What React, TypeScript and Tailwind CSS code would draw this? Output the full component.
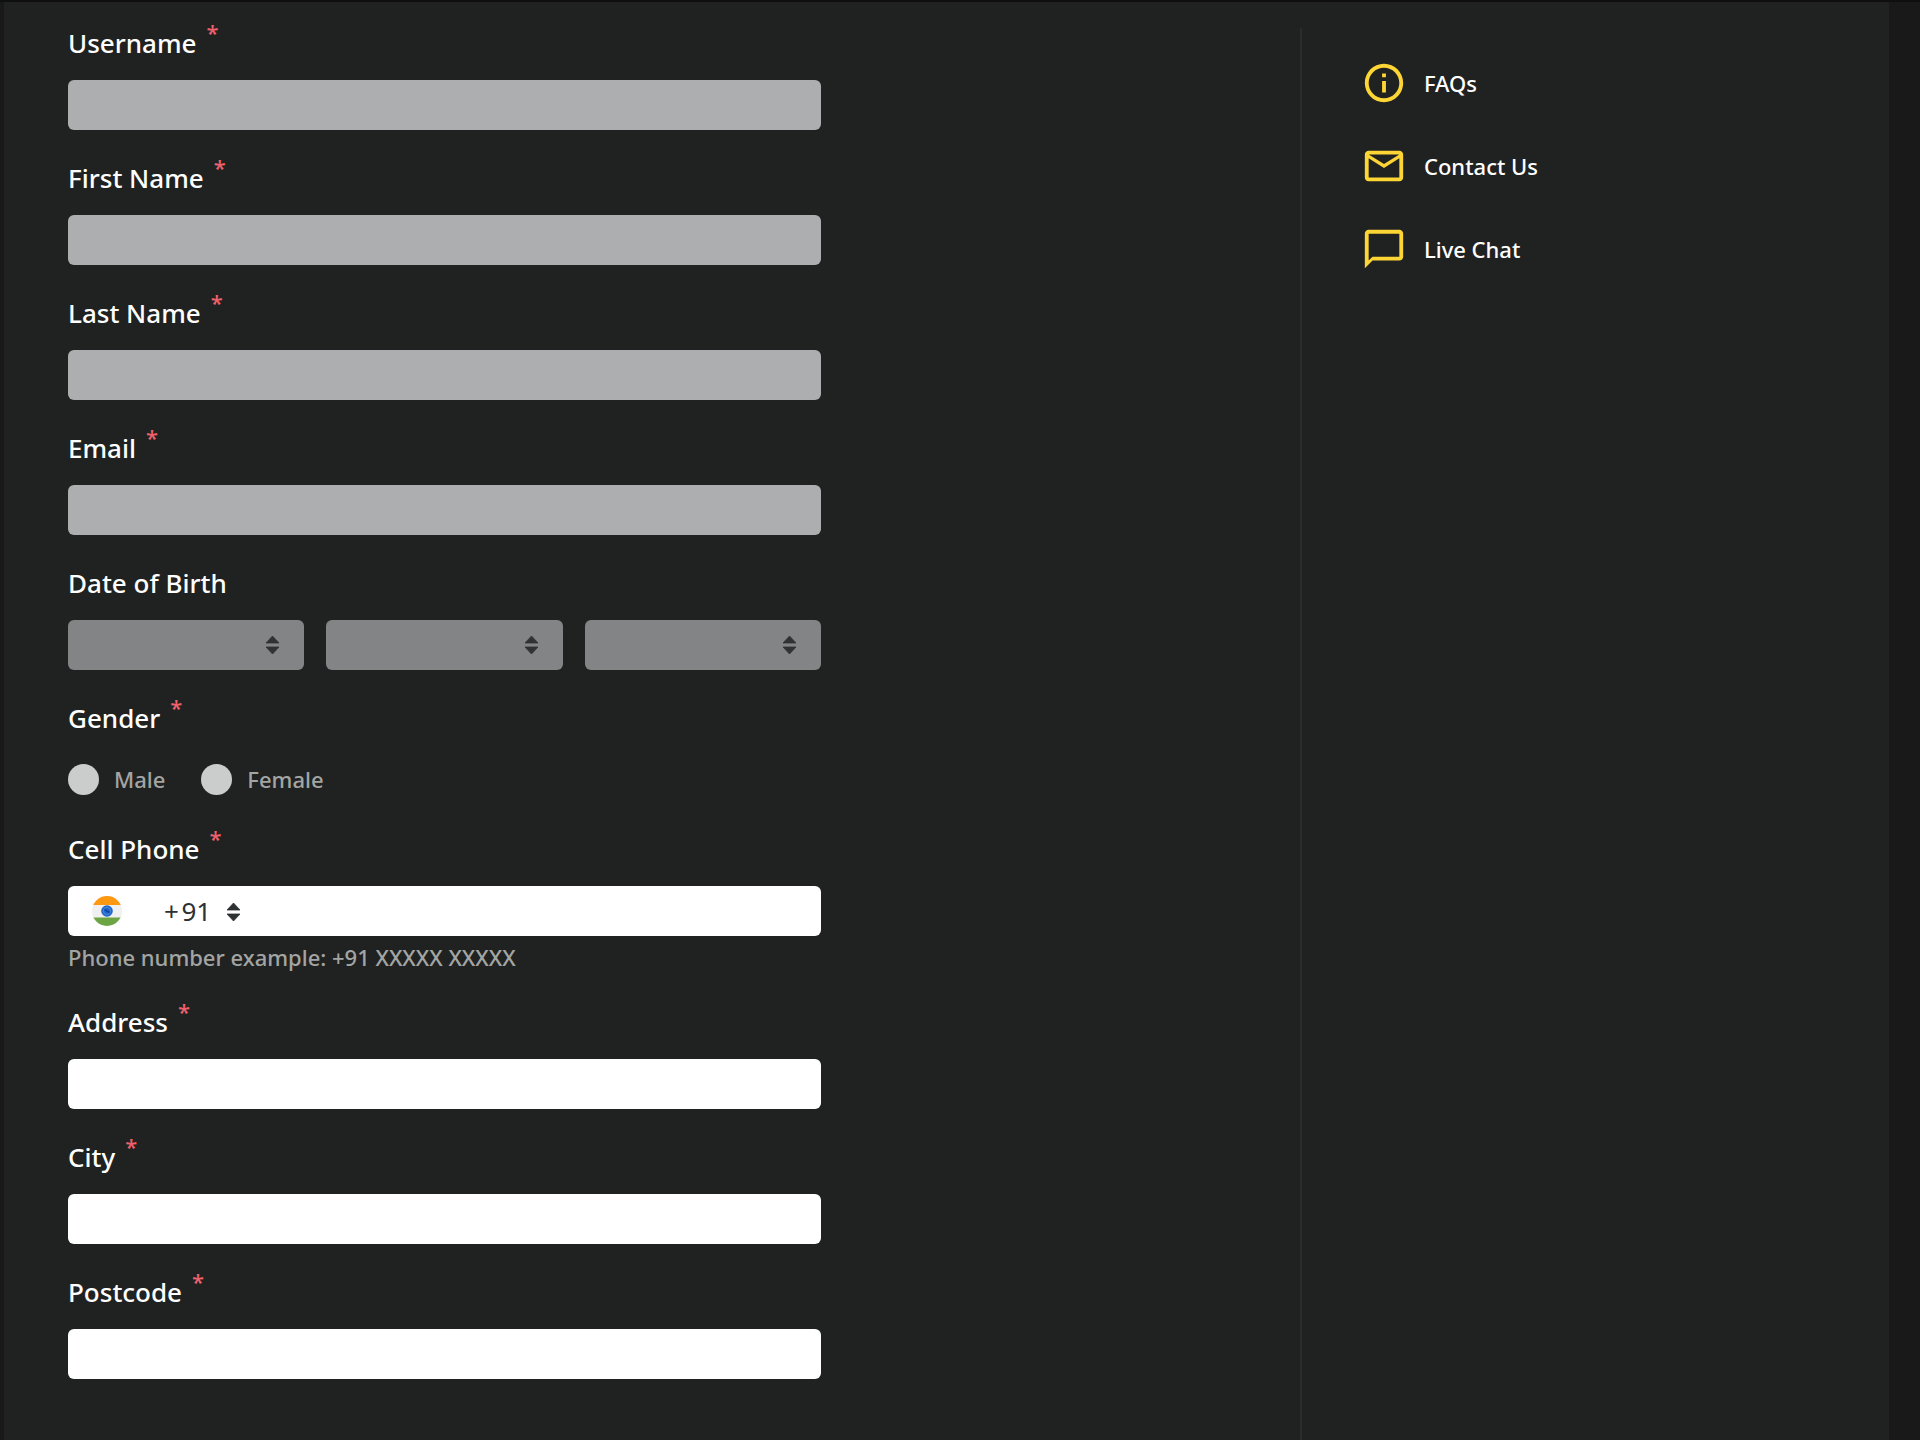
import type { ReactNode } from "react";
import { MdChatBubbleOutline, MdInfoOutline, MdMailOutline } from "react-icons/md";

function SortArrows({ className }: { className: string }) {
  return (
    <svg aria-hidden="true" viewBox="0 0 15 20" className={className}>
      <path
        d="M7.5 1 14 8H1z M7.5 19 14 12H1z"
        fill="currentColor"
        stroke="currentColor"
        strokeWidth="0.800"
        strokeLinejoin="round"
      />
    </svg>
  );
}

function IndiaFlag() {
  return (
    <svg aria-hidden="true" viewBox="0 0 30 30" className="size-[30px] shrink-0">
      <defs>
        <clipPath id="flag-circle">
          <circle cx="15" cy="15" r="15" />
        </clipPath>
      </defs>
      <g clipPath="url(#flag-circle)">
        <rect width="30" height="30" fill="#f0f0f0" />
        <rect width="30" height="9" fill="#ff9811" />
        <rect y="21.500" width="30" height="9" fill="#6da544" />
      </g>
      <circle cx="15" cy="15" r="5.800" fill="#2467c8" />
      <circle cx="15" cy="15" r="3.600" fill="none" stroke="#4f8fe0" strokeWidth="0.800" />
      <path d="M12.500 13.500 17.500 16.500" stroke="#0b46a8" strokeWidth="1.500" />
    </svg>
  );
}

function Star() {
  return <span className="text-[22px] leading-[14px] text-[#f0616d]">*</span>;
}

const labelClass = "flex items-start gap-2.5 text-[26px] leading-[37px] font-medium text-white";

function Field({
  id,
  label,
  required = true,
  children,
}: {
  id: string;
  label: string;
  required?: boolean;
  children: ReactNode;
}) {
  return (
    <div className="flex flex-col gap-[18px]">
      <label htmlFor={id} className={labelClass}>
        {label}
        {required && <Star />}
      </label>
      {children}
    </div>
  );
}

function TextField({ id, label, disabled = false }: { id: string; label: string; disabled?: boolean }) {
  return (
    <Field id={id} label={label}>
      <input
        id={id}
        type="text"
        disabled={disabled}
        className="h-[50px] w-full rounded-md bg-white px-4 text-[26px] text-[#2d3132] outline-none disabled:bg-[#adaeb0]"
      />
    </Field>
  );
}

function DateSelect({ id, label }: { id: string; label: string }) {
  return (
    <div className="relative">
      <select
        id={id}
        aria-label={label}
        disabled
        className="block h-[50px] w-full appearance-none rounded-md bg-[#838485] px-4"
      />
      <SortArrows className="pointer-events-none absolute top-[15px] right-6 h-5 w-[15px] text-[#303233]" />
    </div>
  );
}

function GenderOption({ id, label }: { id: string; label: string }) {
  return (
    <label htmlFor={id} className="flex items-center gap-[15px] text-[22px] leading-[31px] font-medium text-[#a3a5a4]">
      <input
        id={id}
        type="radio"
        name="gender"
        disabled
        className="size-[31px] appearance-none rounded-full bg-[#cbcdcc]"
      />
      {label}
    </label>
  );
}

function HelpLink({ icon, label }: { icon: ReactNode; label: string }) {
  return (
    <li>
      <a href="#" className="flex items-center gap-[17px] text-[22px] leading-8 font-medium text-white">
        <span className="text-[46px] text-[#fdd535]">{icon}</span>
        {label}
      </a>
    </li>
  );
}

export default function App() {
  return (
    <div className="flex min-h-screen border-t-2 border-[#0f0f0f] bg-[#1a1919] pr-[31px] pl-1 font-['Noto_Sans',sans-serif]">
      <div className="flex w-full bg-[#202221]">
        <main className="flex-1 pt-[23px] pl-16">
          <form className="flex w-full max-w-[753px] flex-col gap-[30px]">
            <TextField id="username" label="Username" disabled />
            <TextField id="first-name" label="First Name" disabled />
            <TextField id="last-name" label="Last Name" disabled />
            <TextField id="email" label="Email" disabled />

            <Field id="birth-day" label="Date of Birth" required={false}>
              <div className="grid grid-cols-3 gap-[22px]">
                <DateSelect id="birth-day" label="Day" />
                <DateSelect id="birth-month" label="Month" />
                <DateSelect id="birth-year" label="Year" />
              </div>
            </Field>

            <Field id="male" label="Gender">
              <div className="flex gap-9 pt-[9px] pb-1.5">
                <GenderOption id="male" label="Male" />
                <GenderOption id="female" label="Female" />
              </div>
            </Field>

            <div>
              <Field id="phone" label="Cell Phone">
                <div className="flex h-[50px] items-center rounded-md bg-white pl-6 text-[26px] text-[#2d3132]">
                  <IndiaFlag />
                  <div className="relative ml-[42px]">
                    <select
                      aria-label="Country code"
                      className="block w-20 appearance-none bg-transparent leading-[37px] outline-none"
                    >
                      <option>{"+\u200a91"}</option>
                    </select>
                    <SortArrows className="pointer-events-none absolute top-[9px] right-[3px] h-5 w-[15px]" />
                  </div>
                  <input id="phone" type="tel" className="h-full min-w-0 flex-1 rounded-md px-3 outline-none" />
                </div>
              </Field>
              <p className="pt-1 text-[22px] leading-[34px] font-medium text-[#a3a5a4]">
                Phone number example: +91 XXXXX XXXXX
              </p>
            </div>

            <TextField id="address" label="Address" />
            <TextField id="city" label="City" />
            <TextField id="postcode" label="Postcode" />
          </form>
        </main>

        <aside className="mt-[26px] w-5/16 border-l-2 border-[#2b2d2c] pt-8 pl-[59px]">
          <ul className="flex flex-col gap-[37px]">
            <HelpLink icon={<MdInfoOutline />} label="FAQs" />
            <HelpLink icon={<MdMailOutline />} label="Contact Us" />
            <HelpLink icon={<MdChatBubbleOutline />} label="Live Chat" />
          </ul>
        </aside>
      </div>
    </div>
  );
}
